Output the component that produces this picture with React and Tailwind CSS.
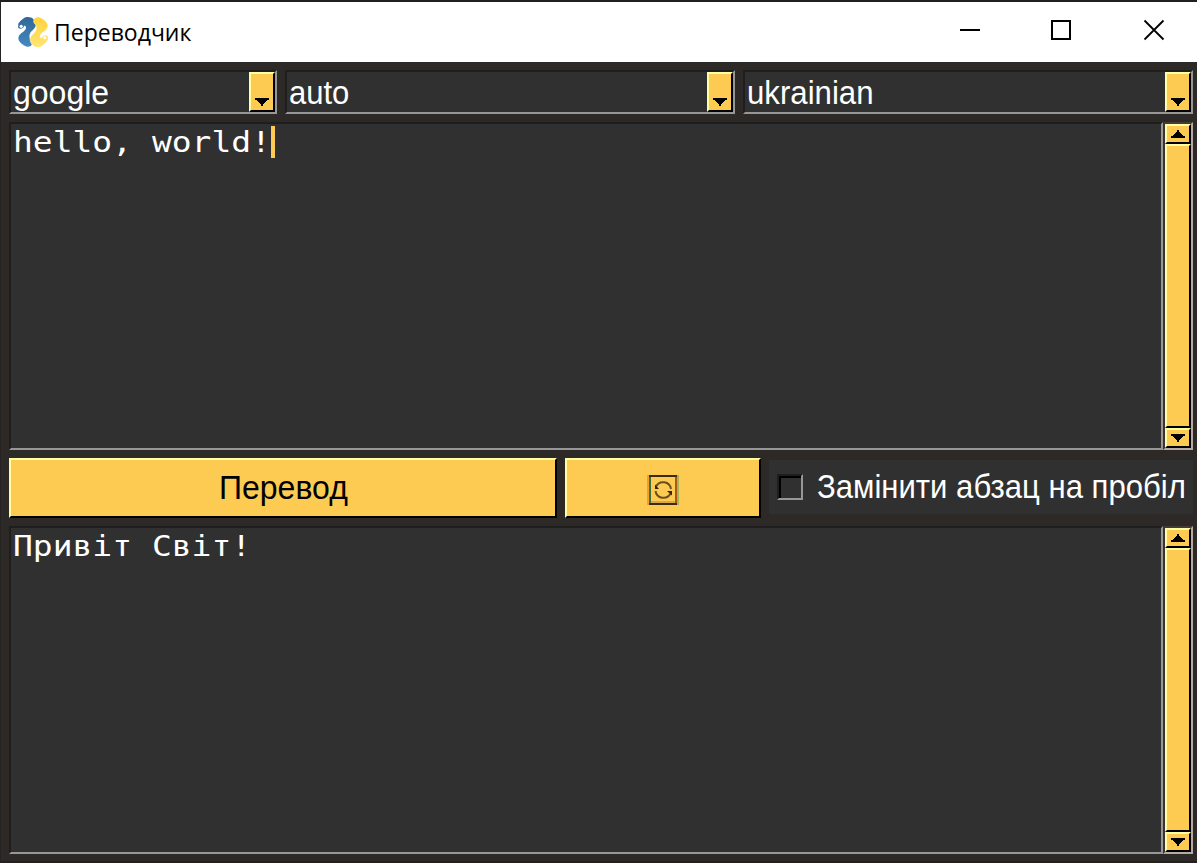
import React from 'react';

const sans = "font-['Liberation_Sans',Arial,sans-serif]";

function Triangle({ up = false }) {
  return (
    <svg width="14" height="8" viewBox="0 0 14 8" shapeRendering="crispEdges">
      <path
        d={
          up
            ? 'M0 8H14V6H12V5H11V4H10V3H9V2H8V0H6V2H5V3H4V4H3V5H2V6H0Z'
            : 'M0 0H14V2H12V3H11V4H10V5H9V6H8V8H6V6H5V5H4V4H3V3H2V2H0Z'
        }
        fill="#000"
      />
    </svg>
  );
}

const raised =
  'border-2 border-t-[#ffffa1] border-l-[#ffffa1] border-r-black border-b-black bg-[#fdcb52]';
const sunken =
  'border-2 border-t-[#1e1e1e] border-l-[#1e1e1e] border-r-[#979797] border-b-[#979797] bg-[#303030]';

function Combo({ value, width, stretch }) {
  return (
    <div className={`flex h-11 ${width} ${sunken}`}>
      <div className="min-w-0 flex-1 pl-[2px] text-[33px] leading-[42px] text-white">
        <span className={`inline-block origin-left ${stretch}`}>{value}</span>
      </div>
      <button className={`flex h-10 w-[26px] items-end justify-center pb-1 ${raised}`}>
        <Triangle />
      </button>
    </div>
  );
}

function ScrollBar() {
  return (
    <div className="flex w-[30px] flex-col border-2 border-t-[#453a36] border-l-[#3a3330] border-r-[#b5aaa5] border-b-[#b5aaa5]">
      <button className={`flex h-5 items-center justify-center ${raised}`}>
        <Triangle up />
      </button>
      <div className={`flex-1 ${raised}`} />
      <button className={`flex h-5 items-center justify-center ${raised}`}>
        <Triangle />
      </button>
    </div>
  );
}

function TextBox({ text, caret }) {
  return (
    <div className="flex h-[328px] w-[1184px]">
      <div className={`flex flex-1 pl-[2px] pt-[2px] ${sunken}`}>
        <div className={`h-8 ${caret ? 'w-[258px]' : 'w-[240px]'}`}>
          <span className="inline-block origin-left scale-x-[1.177] whitespace-pre font-['DejaVu_Sans_Mono',monospace] text-[28px] leading-[34px] text-white">
            {text}
          </span>
        </div>
        {caret && <div className="h-8 w-1 bg-[#fdcb52]" />}
      </div>
      <ScrollBar />
    </div>
  );
}

const lobe =
  'M10 0C12 0 14 .8 15 1.8C16.8 3.5 18 5.5 17.8 8C17.6 12 12.8 13.5 11.8 17C11 20 11.4 22 13.8 24C14.8 25.5 14 29 11.5 29.6C8 30.5 4 27.5 1.5 24.5C0 22.5 0 20 1.5 18C4 15 8 14 8 10.5C7.8 8.8 6.8 8.5 6 9C5.5 11.5 2.5 12.5 .2 11V7.5C.5 5.5 5 1.5 7 .6C8 0 9 0 10 0Z';

function Logo() {
  return (
    <svg width="30" height="30" viewBox="0 0 30 30">
      <defs>
        <linearGradient id="blue" x1="0" y1="0" x2="0" y2="1">
          <stop offset="0" stopColor="#30679a" />
          <stop offset="1" stopColor="#4489c0" />
        </linearGradient>
        <linearGradient id="yellow" x1="0" y1="1" x2="0" y2="0">
          <stop offset="0" stopColor="#ffd33b" />
          <stop offset="1" stopColor="#ffe574" />
        </linearGradient>
      </defs>
      <path d={lobe} fill="url(#blue)" />
      <path d={lobe} transform="rotate(180 15 15)" fill="url(#yellow)" stroke="#fff" strokeWidth=".8" paintOrder="stroke" />
      <circle cx="3.2" cy="9.3" r="1.6" fill="#fff" />
      <circle cx="26.8" cy="20.7" r="1.6" fill="#fff" />
    </svg>
  );
}

function RefreshGlyph() {
  return (
    <svg width="32" height="30" viewBox="0 0 32 30" fill="none">
      <path d="M1 0V30" stroke="#f99b29" strokeWidth="2" />
      <path d="M31 0V30" stroke="#a5b456" strokeWidth="2" />
      <path d="M3 1V29" stroke="#347441" strokeWidth="2" />
      <path d="M29 1V29" stroke="#ad5416" strokeWidth="2" />
      <path d="M4 27H28" stroke="#d9a944" strokeWidth="2" />
      <path d="M2 1H30M2 29H30" stroke="#3c2c12" strokeWidth="2" />
      <path d="M9 11.5A8 8 0 0 1 24 14M23.5 18.5A8 8 0 0 1 8.5 16" stroke="#6a5020" strokeWidth="2" />
      <path d="M8 9.5V14H12ZM25 20.5V16H20Z" fill="#3c2008" />
    </svg>
  );
}

export default function App() {
  return (
    <div className={`flex h-[863px] w-[1197px] flex-col overflow-hidden border-b-2 border-l border-t-2 border-b-[#232020] border-l-[#252222] border-t-[#231f1f] bg-[#2d2926] ${sans}`}>
      <header className="flex h-[60px] shrink-0 items-center justify-between bg-white pl-[17px]">
        <div className="flex items-center gap-[6px]">
          <Logo />
          <span className="font-['Open_Sans','Noto_Sans',sans-serif] text-[23px] leading-8 text-black">Переводчик</span>
        </div>
        <svg width="257" height="60" viewBox="940 2 257 60" fill="none" stroke="#000">
          <path d="M960 30H980M1052 21H1070V39H1052Z" strokeWidth="2" shapeRendering="crispEdges" />
          <path d="M1144.5 20.5L1163.5 39.5M1163.5 20.5L1144.5 39.5" strokeWidth="1.8" />
        </svg>
      </header>
      <main className="flex flex-col gap-2 pl-2 pt-2">
        <div className="flex gap-2">
          <Combo value="google" width="w-[268px]" stretch="scale-x-[0.97]" />
          <Combo value="auto" width="w-[450px]" stretch="scale-x-[0.94]" />
          <Combo value="ukrainian" width="w-[450px]" stretch="scale-x-[0.945]" />
        </div>
        <TextBox text="hello, world!" caret />
        <div className="flex h-[60px] gap-2">
          <button className={`w-[548px] text-[33px] leading-[56px] text-black ${raised}`}>
            <span className="inline-block scale-x-[0.97]">Перевод</span>
          </button>
          <button className={`flex w-[196px] items-center justify-center pt-1 ${raised}`}>
            <RefreshGlyph />
          </button>
          <label className="mt-[2px] flex h-[54px] w-[424px] items-center bg-[#303030] pl-2">
            <span className={`size-[26px] shrink-0 ${sunken}`}>
              <span className="block size-[22px] border-l-2 border-t-2 border-black" />
            </span>
            <span className="w-[382px] pl-[14px]">
              <span className="inline-block origin-left scale-x-[0.942] whitespace-nowrap text-[33px] leading-[54px] text-white">Замінити абзац на пробіл</span>
            </span>
          </label>
        </div>
        <TextBox text="Привіт Світ!" />
      </main>
    </div>
  );
}
